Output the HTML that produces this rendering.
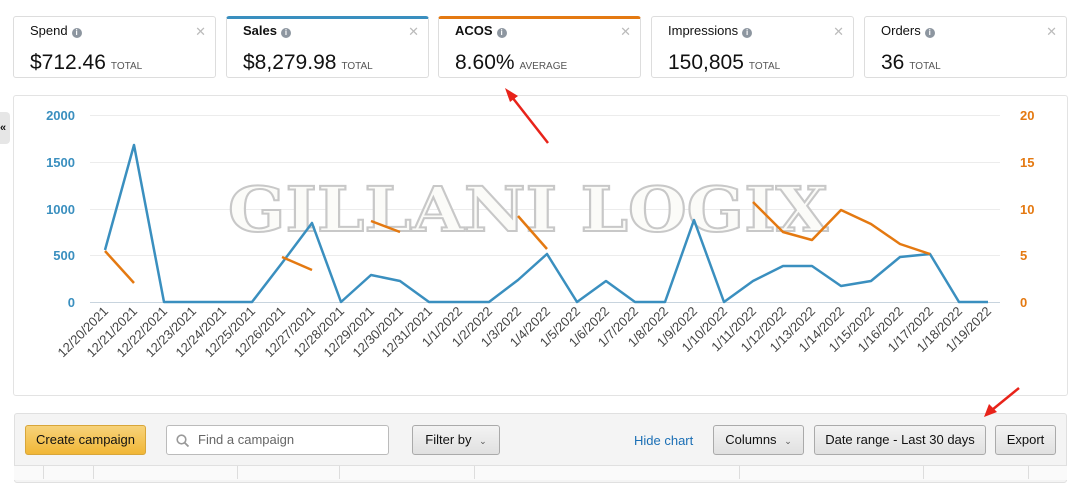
<!DOCTYPE html>
<html><head><meta charset="utf-8"><style>
body{margin:0;width:1084px;height:479px;background:#fff;font-family:"Liberation Sans",Arial,sans-serif;position:relative;overflow:hidden;color:#111}
.card{position:absolute;top:16px;width:203px;height:62px;border:1px solid #ddd;border-radius:3px;background:#fff;box-sizing:border-box}
.card .t{position:absolute;left:16px;top:6px;font-size:13px;color:#111}
.card .t b{font-weight:bold}
.i{display:inline-block;width:10px;height:10px;border-radius:50%;background:#8d96a0;color:#fff;font-size:8px;line-height:10px;text-align:center;font-weight:bold;vertical-align:0;margin-left:4px}
.card .v{position:absolute;left:16px;top:34px;font-size:21px;color:#111}
.card .v small{font-size:10px;color:#555;margin-left:5px}
.card .x{position:absolute;right:9px;top:7px;color:#bbb;font-size:13px}
.btn{position:absolute;top:425px;height:30px;border:1px solid #aaa;border-radius:3px;background:linear-gradient(#f3f3f3,#e0e0e0);box-sizing:border-box;font-size:13px;line-height:28px;text-align:center;color:#111}
</style></head><body>
<div class="card" style="left:13px"><div class="t">Spend<span class="i">i</span></div><div class="x">✕</div><div class="v">$712.46<small>TOTAL</small></div></div>
<div class="card" style="left:226px;border-top:3px solid #3a8fbf"><div class="t" style="top:4px"><b>Sales</b><span class="i">i</span></div><div class="x" style="top:5px">✕</div><div class="v" style="top:32px">$8,279.98<small>TOTAL</small></div></div>
<div class="card" style="left:438px;border-top:3px solid #e47911"><div class="t" style="top:4px"><b>ACOS</b><span class="i">i</span></div><div class="x" style="top:5px">✕</div><div class="v" style="top:32px">8.60%<small>AVERAGE</small></div></div>
<div class="card" style="left:651px"><div class="t">Impressions<span class="i">i</span></div><div class="x">✕</div><div class="v">150,805<small>TOTAL</small></div></div>
<div class="card" style="left:864px"><div class="t">Orders<span class="i">i</span></div><div class="x">✕</div><div class="v">36<small>TOTAL</small></div></div>
<div style="position:absolute;left:13px;top:95px;width:1055px;height:301px;border:1px solid #e3e3e3;border-radius:3px;box-sizing:border-box"></div>
<div style="position:absolute;left:0;top:112px;width:10px;height:32px;background:#e6e6e6;border-radius:0 4px 4px 0;font-size:11px;font-weight:bold;line-height:32px">«</div>
<div style="position:absolute;left:14px;top:413px;width:1053px;height:70px;background:#f4f4f4;border:1px solid #e0e0e0;border-radius:3px;box-sizing:border-box"></div>
<div style="position:absolute;left:14px;top:465px;width:1053px;height:14px;background:#fafafa;border-top:1px solid #e0e0e0"></div>
<div style="position:absolute;top:466px;left:43px;width:1px;height:13px;background:#ddd"></div><div style="position:absolute;top:466px;left:93px;width:1px;height:13px;background:#ddd"></div><div style="position:absolute;top:466px;left:237px;width:1px;height:13px;background:#ddd"></div><div style="position:absolute;top:466px;left:339px;width:1px;height:13px;background:#ddd"></div><div style="position:absolute;top:466px;left:474px;width:1px;height:13px;background:#ddd"></div><div style="position:absolute;top:466px;left:739px;width:1px;height:13px;background:#ddd"></div><div style="position:absolute;top:466px;left:923px;width:1px;height:13px;background:#ddd"></div><div style="position:absolute;top:466px;left:1028px;width:1px;height:13px;background:#ddd"></div>
<div class="btn" style="left:25px;width:121px;background:linear-gradient(#f7d37a,#f1b736);border-color:#d8a63a">Create campaign</div>
<div style="position:absolute;left:166px;top:425px;width:223px;height:30px;border:1px solid #bbb;border-radius:3px;background:#fff;box-sizing:border-box;font-size:13px;line-height:28px;color:#666;padding-left:31px">Find a campaign
<svg style="position:absolute;left:9px;top:8px" width="14" height="14"><circle cx="5.5" cy="5.5" r="4.3" fill="none" stroke="#999" stroke-width="1.6"/><line x1="8.7" y1="8.7" x2="12.5" y2="12.5" stroke="#999" stroke-width="1.8"/></svg></div>
<div class="btn" style="left:412px;width:88px">Filter by <span style="font-size:9px;color:#555;margin-left:4px">⌄</span></div>
<div style="position:absolute;left:634px;top:433px;font-size:13px;color:#1b6fb5">Hide chart</div>
<div class="btn" style="left:713px;width:91px">Columns <span style="font-size:9px;color:#555;margin-left:4px">⌄</span></div>
<div class="btn" style="left:814px;width:172px">Date range - Last 30 days</div>
<div class="btn" style="left:995px;width:61px">Export</div>
<svg style="position:absolute;left:0;top:0" width="1084" height="479">
<g stroke="#ececec" stroke-width="1">
<line x1="90" y1="115.5" x2="1000" y2="115.5"/><line x1="90" y1="162.5" x2="1000" y2="162.5"/><line x1="90" y1="209.5" x2="1000" y2="209.5"/><line x1="90" y1="255.5" x2="1000" y2="255.5"/></g>
<line x1="90" y1="302.5" x2="1000" y2="302.5" stroke="#c8d4de"/>
<g font-size="13" font-weight="bold" fill="#3a8fbf" text-anchor="end"><text x="75" y="120">2000</text><text x="75" y="167">1500</text><text x="75" y="214">1000</text><text x="75" y="260">500</text><text x="75" y="307">0</text></g>
<g font-size="13" font-weight="bold" fill="#e47911"><text x="1020" y="120">20</text><text x="1020" y="167">15</text><text x="1020" y="214">10</text><text x="1020" y="260">5</text><text x="1020" y="307">0</text></g>
<text x="228" y="231" font-family="DejaVu Serif,serif" font-weight="bold" font-size="62" fill="#fbfbf8" stroke="#c8c8c8" stroke-width="2" textLength="600" lengthAdjust="spacingAndGlyphs">GILLANI LOGIX</text>
<polyline fill="none" stroke="#3a8fbf" stroke-width="2.5" stroke-linejoin="round" points="105,250 134,145 164,302 193,302 223,302 252,302 282,263 312,223 341,302 371,275 400,281 429,302 459,302 489,302 518,280 547,254 577,302 606,281 635,302 665,302 694,220 724,302 753,281 783,266 812,266 841,286 871,281 900,257 930,254 959,302 988,302"/>
<g fill="none" stroke="#e47911" stroke-width="2.5" stroke-linejoin="round">
<polyline points="105,251 134,283"/><polyline points="282,257 312,270"/><polyline points="371,221 400,232"/><polyline points="518,216 547,249"/>
<polyline points="753,202 783,232 812,240 841,210 871,224 900,244 930,254"/></g>
<g font-size="13" fill="#444" text-anchor="end">
<text transform="translate(109,312) rotate(-45)">12/20/2021</text><text transform="translate(138,312) rotate(-45)">12/21/2021</text><text transform="translate(168,312) rotate(-45)">12/22/2021</text><text transform="translate(197,312) rotate(-45)">12/23/2021</text><text transform="translate(227,312) rotate(-45)">12/24/2021</text><text transform="translate(256,312) rotate(-45)">12/25/2021</text><text transform="translate(286,312) rotate(-45)">12/26/2021</text><text transform="translate(316,312) rotate(-45)">12/27/2021</text><text transform="translate(345,312) rotate(-45)">12/28/2021</text><text transform="translate(375,312) rotate(-45)">12/29/2021</text><text transform="translate(404,312) rotate(-45)">12/30/2021</text><text transform="translate(433,312) rotate(-45)">12/31/2021</text><text transform="translate(463,312) rotate(-45)">1/1/2022</text><text transform="translate(493,312) rotate(-45)">1/2/2022</text><text transform="translate(522,312) rotate(-45)">1/3/2022</text><text transform="translate(551,312) rotate(-45)">1/4/2022</text><text transform="translate(581,312) rotate(-45)">1/5/2022</text><text transform="translate(610,312) rotate(-45)">1/6/2022</text><text transform="translate(639,312) rotate(-45)">1/7/2022</text><text transform="translate(669,312) rotate(-45)">1/8/2022</text><text transform="translate(698,312) rotate(-45)">1/9/2022</text><text transform="translate(728,312) rotate(-45)">1/10/2022</text><text transform="translate(757,312) rotate(-45)">1/11/2022</text><text transform="translate(787,312) rotate(-45)">1/12/2022</text><text transform="translate(816,312) rotate(-45)">1/13/2022</text><text transform="translate(845,312) rotate(-45)">1/14/2022</text><text transform="translate(875,312) rotate(-45)">1/15/2022</text><text transform="translate(904,312) rotate(-45)">1/16/2022</text><text transform="translate(934,312) rotate(-45)">1/17/2022</text><text transform="translate(963,312) rotate(-45)">1/18/2022</text><text transform="translate(992,312) rotate(-45)">1/19/2022</text></g>
<g stroke="#e8231a" stroke-width="2.5" fill="#e8231a"><line x1="548" y1="143" x2="512" y2="97"/><polygon points="505,88 518,96 510,102" stroke="none"/>
<line x1="1019" y1="388" x2="992" y2="410"/><polygon points="984,417 989,404 997,412" stroke="none"/></g>
</svg>
</body></html>
